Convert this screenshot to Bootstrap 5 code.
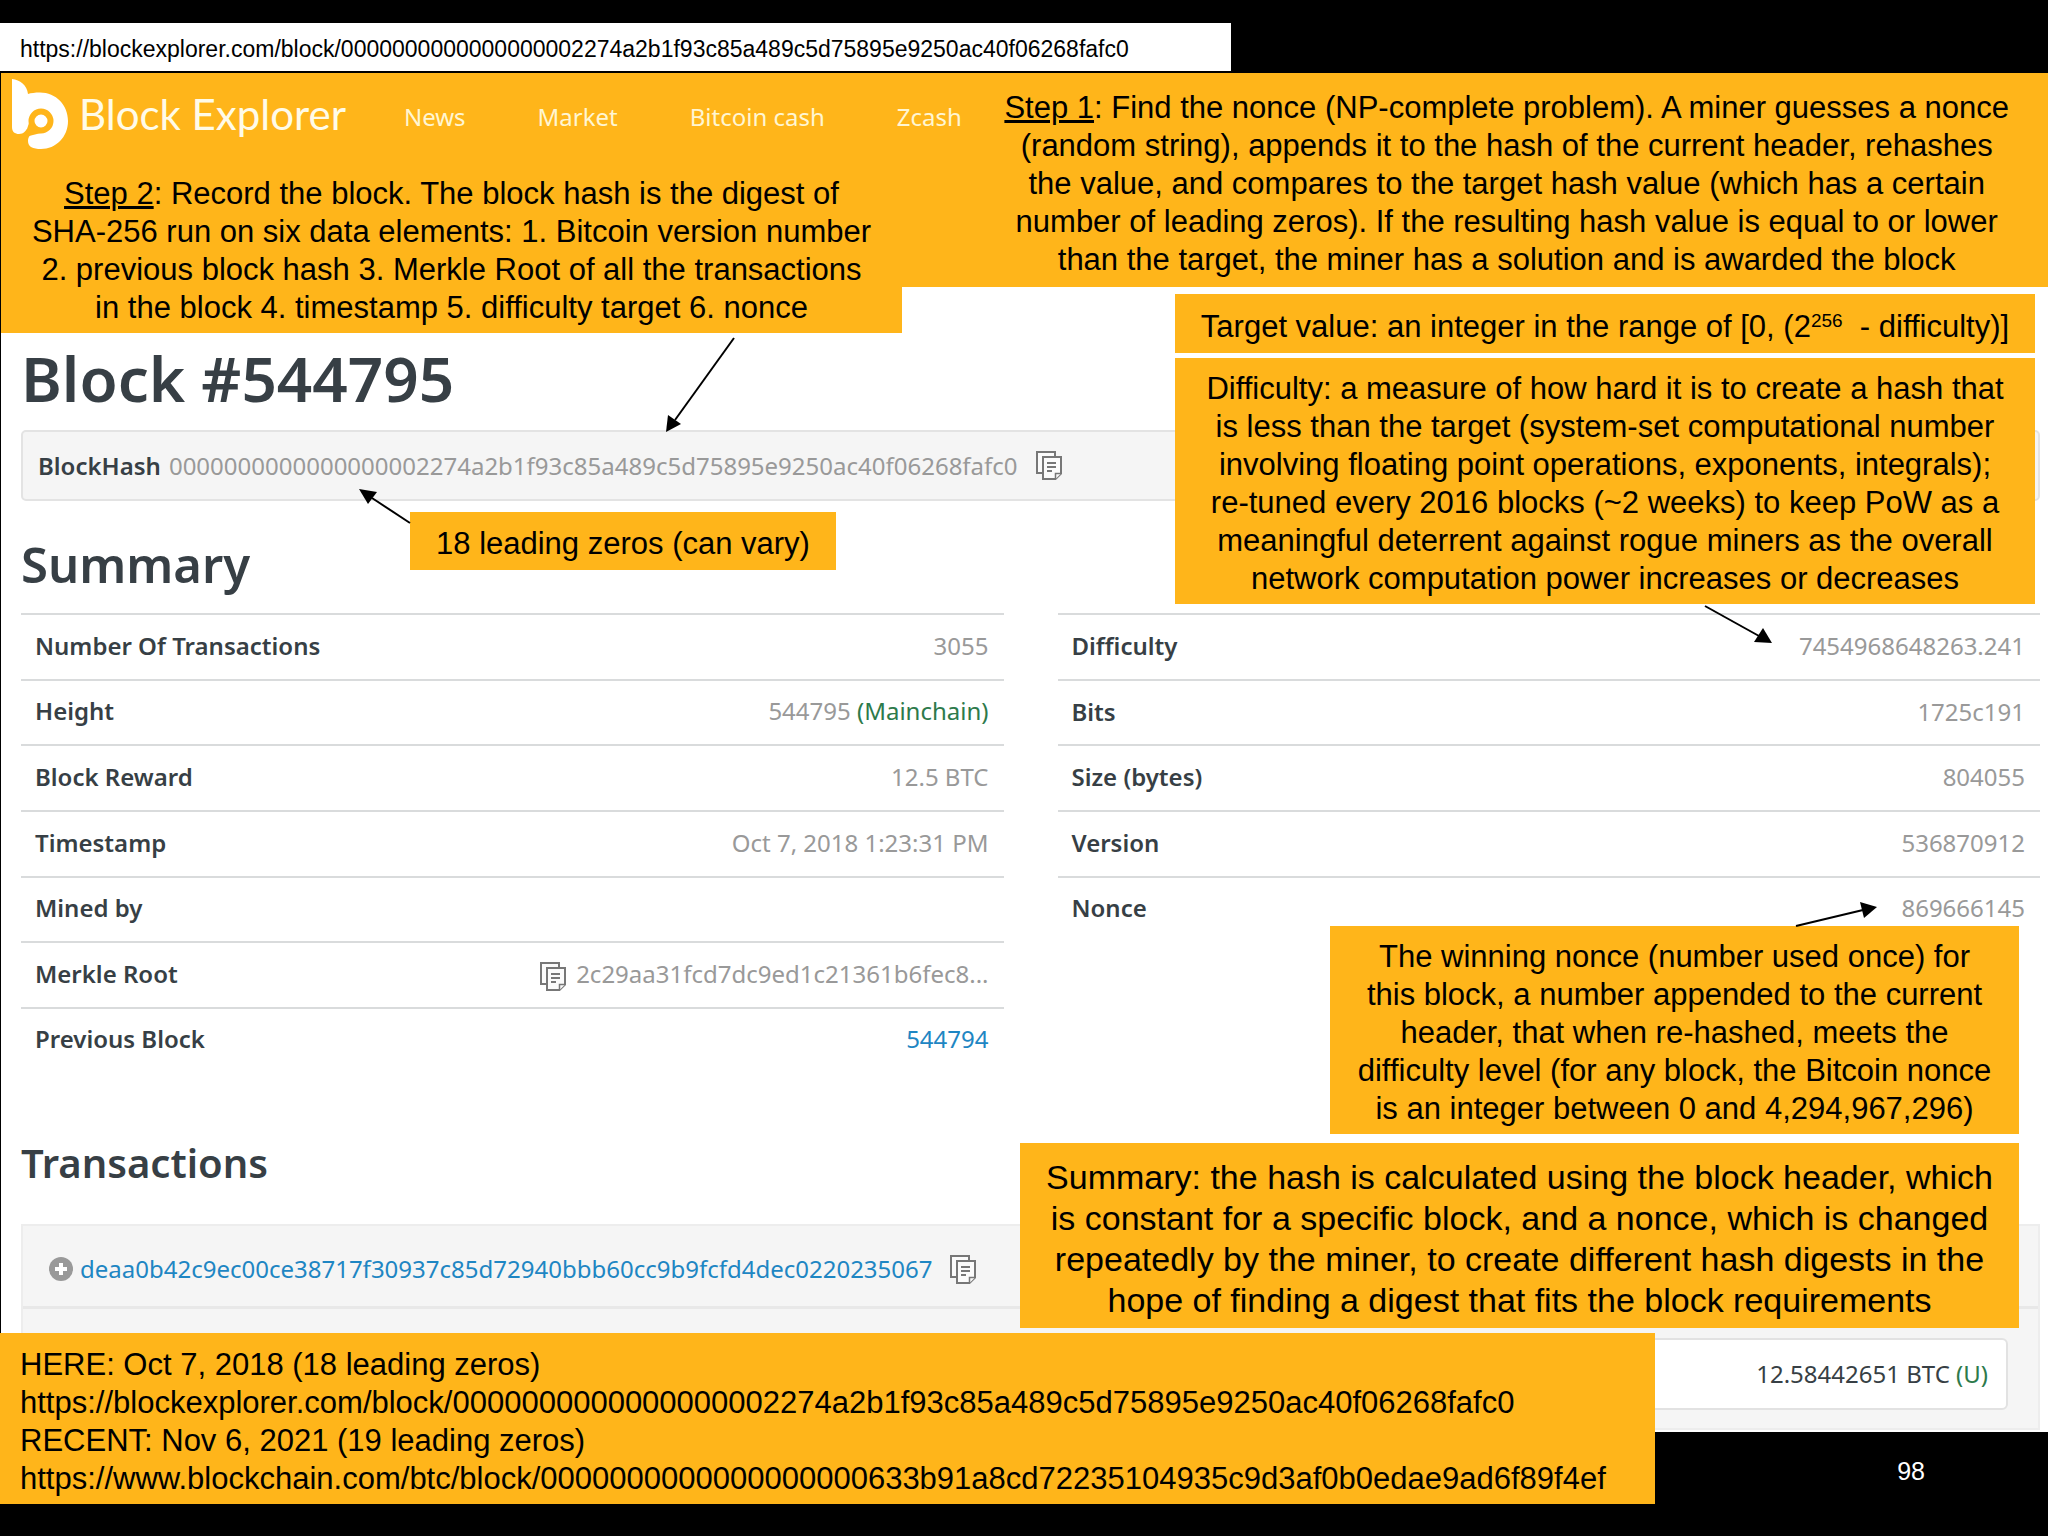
<!DOCTYPE html>
<html lang="en">
<head>
<meta charset="utf-8">
<meta name="viewport" content="width=device-width, initial-scale=1">
<title>Block #544795 - Block Explorer</title>
<link rel="stylesheet" href="https://cdn.jsdelivr.net/npm/bootstrap@5.3.0/dist/css/bootstrap.min.css">
<style>
  :root { --amber: #ffb51a; --ink: #373f45; --muted: #999; --line: #d9dbdc; --well: #f5f5f5; }
  body { background: #000; font-family: "Noto Sans", sans-serif; font-size: 24px; line-height: 36px; color: var(--ink); }
  a { text-decoration: none; }
  .slide { padding-top: 23px; }
  .address { width: 60%; min-width: 1231px; height: 48px; line-height: 52px; padding-left: 20px; margin-bottom: 2px;
    background: #fff; color: #000; font-family: "Liberation Sans", sans-serif; font-size: 23px; }
  .capture { background: #fff; border-left: 1px solid #000; }
  .site-head { background: var(--amber); height: 214px; }
  .brand { padding: 6px 0 0 10px; gap: 10px; font-family: Lato, sans-serif; font-size: 42px; line-height: 70px; color: #fffbe8; }
  .site-nav { gap: 72px; padding: 24px 0 0 58px; }
  .site-nav a { color: #fff6d2; font-size: 24px; line-height: 40px; white-space: nowrap; }
  .note { background: var(--amber); color: #000; font-family: "Liberation Sans", sans-serif; font-size: 31px;
    line-height: 38px; text-align: center; white-space: nowrap; }
  .note-over { position: absolute; display: flex; flex-direction: column; justify-content: center; z-index: 2; padding-top: 6px; }
  .note sup { font-size: 19px; line-height: 0; }
  .n-one { padding: 16px 39px 0 0; }
  .n-two { left: 1px; top: 162px; width: 901px; height: 171px; }
  .n-target { right: 13px; top: 294px; width: 860px; height: 59px; }
  .n-diff { right: 13px; top: 358px; width: 860px; height: 246px; }
  .n-zeros { left: 410px; top: 512px; width: 426px; height: 58px; }
  .n-nonce { right: 29px; top: 926px; width: 689px; height: 208px; }
  .n-sum { right: 29px; top: 1143px; width: 999px; height: 185px; font-size: 34px; line-height: 41px; }
  .n-links { left: 0; top: 1333px; width: 1655px; height: 171px; padding-left: 20px; text-align: left; }
  .arrow { position: absolute; overflow: visible; }
  .a-two { left: 660px; top: 171px; }
  .a-zeros { left: -60px; top: -30px; }
  .a-diff { right: 250px; top: 246px; }
  .a-nonce { right: 130px; top: -30px; }
  .content { padding: 61px 8px 2px 20px; }
  h1 { font-size: 62px; line-height: 60px; font-weight: 600; margin: 0 0 22px; }
  h2 { font-size: 49px; line-height: 60px; font-weight: 600; margin: 33px 0 19px; }
  h3 { font-size: 40px; line-height: 50px; font-weight: 600; margin: 66px 0 36px; }
  .hash-well { background: var(--well); border: 2px solid #e3e3e3; border-radius: 5px; height: 71px; padding-left: 15px; gap: 8px; color: var(--muted); }
  .hash-well b { color: var(--ink); font-weight: 600; }
  .copy-btn { border: 0; background: none; padding: 0; line-height: 0; }
  .hash-well .copy-btn, .tx-head .copy-btn { margin-left: 10px; }
  td .copy-btn { margin-right: 4px; }
  .facts { --bs-gutter-x: 54px; }
  .facts table { width: 100%; height: 459px; }
  .facts table.five { height: 328px; }
  .facts tr { border-top: 2px solid var(--line); }
  .facts th { font-weight: 600; padding: 0 0 2px 14px; }
  .facts td { text-align: right; color: var(--muted); padding: 0 15px 2px 0; }
  .ok { color: #2d7a4b; }
  .blue { color: #1e86c3; }
  .tx { background: var(--well); border: 2px solid #ededed; height: 206px; }
  .tx-head { height: 83px; padding: 6px 0 0 26px; gap: 7px; border-bottom: 3px solid #e8e8e8; }
  .tx-out { width: 50%; height: 72px; margin: 29px 30px 0 auto; padding-right: 18px; background: #fff; border: 2px solid #e2e2e2; border-radius: 6px; }
  .page-no { height: 104px; padding: 21px 123px 0 0; text-align: right; color: #fff; font-family: "Liberation Sans", sans-serif; font-size: 25px; }
</style>
<script src="https://cdn.jsdelivr.net/npm/bootstrap@5.3.0/dist/js/bootstrap.bundle.min.js"></script>
</head>
<body>
<svg class="d-none" aria-hidden="true">
  <symbol id="copy" viewBox="0 0 26 29">
    <g fill="#fbfbfb" stroke="#777" stroke-width="2">
      <path d="M1 1H19V22H1Z"/>
      <path d="M7 6H25V22.500L19.500 28H7Z"/>
      <path d="M19.500 28V22.500H25" stroke-width="1.500"/>
      <path d="M11 12H20M11 16H20M11 20H16" stroke-width="1.800"/>
    </g>
  </symbol>
</svg>
<main class="slide position-relative">
  <div class="address">https://blockexplorer.com/block/0000000000000000002274a2b1f93c85a489c5d75895e9250ac40f06268fafc0</div>
  <div class="capture">
    <header class="site-head d-flex justify-content-between align-items-start">
      <div class="d-flex">
        <a class="brand d-flex" href="#">
          <svg width="58" height="70" viewBox="0 0 58 70" aria-hidden="true">
            <path fill="#fff" d="M1 0C9 1 16 6 17 15C20 14 24 13.500 29 13.500C45 13.500 57 26 57 42C57 58 45 70 30 70C22 70 17 68 17 62C17 57 20 54 28 53L16 50C14 52 13 55 8 55C4 55 1 53 1 48Z"/>
            <circle cx="30" cy="42" r="9.500" fill="none" stroke="#ffb51a" stroke-width="6"/>
            <path d="M18 44L15 53L18 57L30 54Z" fill="#ffb51a"/>
          </svg>
          <span>Block Explorer</span>
        </a>
        <nav class="site-nav d-flex align-items-start">
          <a href="#">News</a><a href="#">Market</a><a href="#">Bitcoin cash</a><a href="#">Zcash</a>
        </nav>
      </div>
      <div class="note n-one"><u>Step 1</u>: Find the nonce (NP-complete problem). A miner guesses a nonce<br>(random string), appends it to the hash of the current header, rehashes<br>the value, and compares to the target hash value (which has a certain<br>number of leading zeros). If the resulting hash value is equal to or lower<br>than the target, the miner has a solution and is awarded the block</div>
    </header>
    <div class="content">
      <h1>Block #544795</h1>
      <div class="hash-well d-flex align-items-center">
        <b>BlockHash</b><span>0000000000000000002274a2b1f93c85a489c5d75895e9250ac40f06268fafc0</span>
        <button class="copy-btn" type="button" aria-label="Copy block hash"><svg width="26" height="29"><use href="#copy"/></svg></button>
      </div>
      <h2>Summary</h2>
      <div class="facts row align-items-start">
        <div class="col-6">
          <table>
            <tr><th scope="row">Number Of Transactions</th><td>3055</td></tr>
            <tr><th scope="row">Height</th><td>544795 <span class="ok">(Mainchain)</span></td></tr>
            <tr><th scope="row">Block Reward</th><td>12.5 BTC</td></tr>
            <tr><th scope="row">Timestamp</th><td>Oct 7, 2018 1:23:31 PM</td></tr>
            <tr><th scope="row">Mined by</th><td></td></tr>
            <tr><th scope="row">Merkle Root</th><td><button class="copy-btn" type="button" aria-label="Copy Merkle root"><svg width="26" height="29"><use href="#copy"/></svg></button> 2c29aa31fcd7dc9ed1c21361b6fec8...</td></tr>
            <tr><th scope="row">Previous Block</th><td><a class="blue" href="#">544794</a></td></tr>
          </table>
        </div>
        <div class="col-6">
          <table class="five">
            <tr><th scope="row">Difficulty</th><td>7454968648263.241</td></tr>
            <tr><th scope="row">Bits</th><td>1725c191</td></tr>
            <tr><th scope="row">Size (bytes)</th><td>804055</td></tr>
            <tr><th scope="row">Version</th><td>536870912</td></tr>
            <tr><th scope="row">Nonce</th><td>869666145</td></tr>
          </table>
        </div>
      </div>
      <h3>Transactions</h3>
      <section class="tx">
        <div class="tx-head d-flex align-items-center">
          <svg width="24" height="24" viewBox="0 0 24 24" aria-hidden="true"><circle cx="12" cy="12" r="12" fill="#999"/><path d="M12 6V18M6 12H18" stroke="#fff" stroke-width="4"/></svg>
          <a class="blue" href="#">deaa0b42c9ec00ce38717f30937c85d72940bbb60cc9b9fcfd4dec0220235067</a>
          <button class="copy-btn" type="button" aria-label="Copy transaction id"><svg width="26" height="29"><use href="#copy"/></svg></button>
        </div>
        <div class="tx-out d-flex align-items-center justify-content-end">12.58442651 BTC&nbsp;<span class="ok">(U)</span></div>
      </section>
    </div>
  </div>
  <footer class="page-no">98</footer>

  <aside class="note note-over n-two">
    <div><u>Step 2</u>: Record the block. The block hash is the digest of<br>SHA-256 run on six data elements: 1. Bitcoin version number<br>2. previous block hash 3. Merkle Root of all the transactions<br>in the block 4. timestamp 5. difficulty target 6. nonce</div>
    <svg class="arrow a-two" width="80" height="100"><path d="M73 5L14 87" stroke="#000" stroke-width="2"/><path d="M5 99L7 82L20 91Z"/></svg>
  </aside>
  <aside class="note note-over n-target"><div>Target value: an integer in the range of [0, (2<sup>256</sup>&nbsp; - difficulty)]</div></aside>
  <aside class="note note-over n-diff">
    <div>Difficulty: a measure of how hard it is to create a hash that<br>is less than the target (system-set computational number<br>involving floating point operations, exponents, integrals);<br>re-tuned every 2016 blocks (~2 weeks) to keep PoW as a<br>meaningful deterrent against rogue miners as the overall<br>network computation power increases or decreases</div>
    <svg class="arrow a-diff" width="90" height="45"><path d="M10 2L64 32" stroke="#000" stroke-width="2"/><path d="M77 39L68 24L59 38Z"/></svg>
  </aside>
  <aside class="note note-over n-zeros">
    <div>18 leading zeros (can vary)</div>
    <svg class="arrow a-zeros" width="60" height="45"><path d="M60 41L22 16" stroke="#000" stroke-width="2"/><path d="M9 7L27 10L18 22Z"/></svg>
  </aside>
  <aside class="note note-over n-nonce">
    <div>The winning nonce (number used once) for<br>this block, a number appended to the current<br>header, that when re-hashed, meets the<br>difficulty level (for any block, the Bitcoin nonce<br>is an integer between 0 and 4,294,967,296)</div>
    <svg class="arrow a-nonce" width="100" height="30"><path d="M7 30L74 14" stroke="#000" stroke-width="2"/><path d="M88 11L71 6L75 22Z"/></svg>
  </aside>
  <aside class="note note-over n-sum"><div>Summary: the hash is calculated using the block header, which<br>is constant for a specific block, and a nonce, which is changed<br>repeatedly by the miner, to create different hash digests in the<br>hope of finding a digest that fits the block requirements</div></aside>
  <aside class="note note-over n-links"><div>HERE: Oct 7, 2018 (18 leading zeros)<br>https://blockexplorer.com/block/0000000000000000002274a2b1f93c85a489c5d75895e9250ac40f06268fafc0<br>RECENT: Nov 6, 2021 (19 leading zeros)<br>https://www.blockchain.com/btc/block/0000000000000000000633b91a8cd72235104935c9d3af0b0edae9ad6f89f4ef</div></aside>
</main>
</body>
</html>
